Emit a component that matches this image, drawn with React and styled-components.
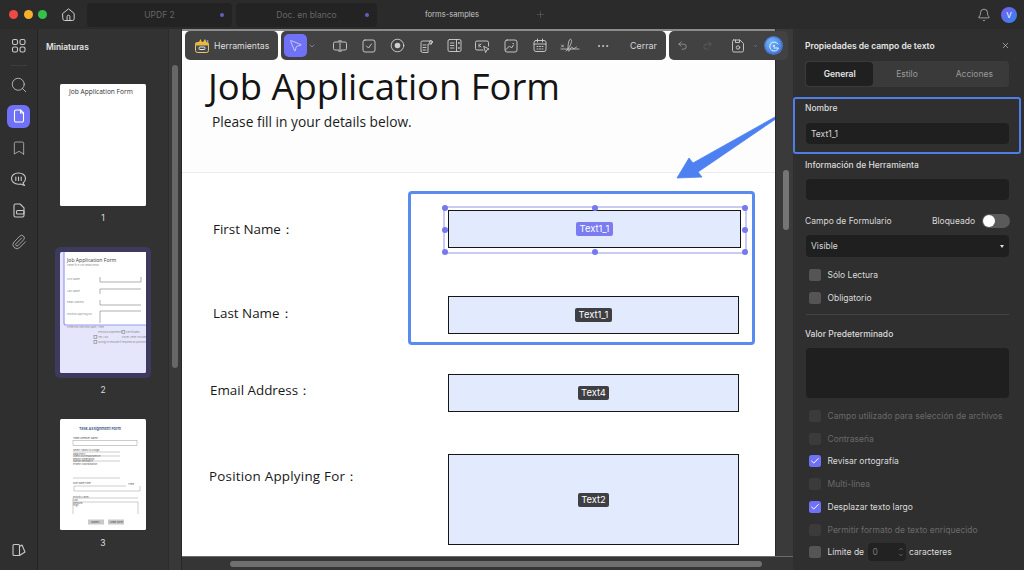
import React from "react";
import styled, { createGlobalStyle } from "styled-components";
import {
  Search, Bookmark, Paperclip, Bell, ChevronDown, MousePointer2,
  Undo2, Redo2, Ellipsis, X, Check, ChevronUp, Plus,
} from "lucide-react";

const Global = createGlobalStyle`
  html, body { margin: 0; padding: 0; background: #2e2e2e; }
  * { box-sizing: border-box; }
  body { font-family: Inter, "Liberation Sans", sans-serif; }
`;

const Shell = styled.div`
  width: 1024px; height: 570px; overflow: hidden; display: flex; flex-direction: column;
  background: #2f2f2f; color: #e6e6e6;
`;

/* ---------- title bar ---------- */
const TitleBar = styled.header`
  height: 29px; flex: none; display: flex; align-items: center; background: #2b2b2b; padding-left: 9px;
`;
const Light = styled.span`
  width: 9px; height: 9px; border-radius: 50%; background: ${p => p.$c}; margin-right: 5.5px;
`;
const HomeBtn = styled.span`
  display: flex; margin: 0 10px 0 7.5px; color: #cfcfcf;
`;
const Tab = styled.div`
  width: ${p => p.$w}px; height: 24px; margin-right: 4px; position: relative; display: flex; align-items: center; justify-content: center;
  background: ${p => (p.$active ? "#2b2b2b" : "#232323")}; border-radius: 4px;
  color: ${p => (p.$active ? "#c4c4c4" : "#666")}; font-size: ${p => (p.$active ? 7.6 : 8.5)}px;
`;
const TabDot = styled.i`
  position: absolute; right: 8px; top: 10px; width: 4px; height: 4px; border-radius: 50%; background: #5f62b8;
`;
const AddTab = styled.span`
  display: flex; color: #666; margin-left: 8px;
`;
const TitleRight = styled.div`
  margin-left: auto; display: flex; align-items: center; gap: 10px; padding-right: 7px; color: #d0d0d0;
`;
const Avatar = styled.div`
  width: 16px; height: 16px; border-radius: 50%; background: linear-gradient(135deg, #7a5cf0, #2f86ef);
  font-size: 8px; color: #fff; display: flex; align-items: center; justify-content: center;
`;

const Body = styled.div`
  flex: 1; display: flex; min-height: 0;
`;

/* ---------- left rail ---------- */
const Rail = styled.nav`
  width: 38px; flex: none; display: flex; flex-direction: column; align-items: center; padding-top: 5px;
  border-right: 1px solid #232323; background: #2f2f2f; color: #c9c9c9;
`;
const RailBtn = styled.div`
  width: 23px; height: 23px; flex: none; border-radius: 6px; display: flex; align-items: center; justify-content: center;
  margin-bottom: 8.4px; background: ${p => (p.$active ? "#6f72f6" : "transparent")}; color: ${p => (p.$active ? "#fff" : "inherit")};
`;
const RailRule = styled.div`
  width: 16px; height: 1px; background: #3c3c3c; margin: 0 0 7px;
`;
const RailFoot = styled.div`
  margin-top: auto; padding-bottom: 12px; display: flex;
`;

/* ---------- thumbnails ---------- */
const ThumbPane = styled.aside`
  width: 144px; flex: none; display: flex; background: #323232; border-right: 1px solid #262626;
`;
const ThumbList = styled.div`
  width: 130px; flex: none; padding: 11px 0 0 8px;
`;
const PaneTitle = styled.div`
  font-size: 8.4px; font-weight: 600; color: #e4e4e4; height: 14px; line-height: 14px; margin-bottom: 25px;
`;
const ThumbItem = styled.div`
  width: 96px; margin: 0 0 0 9px; display: flex; flex-direction: column; align-items: center;
  padding-bottom: ${p => p.$after || 0}px;
`;
const ThumbFrame = styled.div`
  padding: 5px; width: 96px; border-radius: 5px; background: ${p => (p.$sel ? "#3d3a5e" : "transparent")};
  display: flex;
`;
const ThumbNum = styled.div`
  font-size: 8.5px; color: #dcdcdc; text-align: center; height: 12px; line-height: 12px; margin-top: ${p => p.$top}px;
`;
const ThumbScroll = styled.div`
  width: 13px; flex: none; background: #383838; border-left: 1px solid #2c2c2c; padding: 36px 0 0 3px;
`;
const ThumbHandle = styled.div`
  width: 6px; height: 303px; background: #676767; border-radius: 3px;
`;

/* ---------- viewer ---------- */
const Viewer = styled.main`
  flex: 1; min-width: 0; position: relative; display: flex; flex-direction: column;
`;
const ViewerRow = styled.div`
  flex: 1; min-height: 0; display: flex;
`;
const Page = styled.div`
  width: 593px; flex: none; position: relative; overflow: hidden; background: #fff; color: #111;
  border-top: 2px solid #8c8c8c; font-family: "Open Sans", "Noto Sans", sans-serif;
`;
const DocHead = styled.div`
  height: 142px; background: #fdfdfd; border-bottom: 1px solid #ececec; padding: 32px 0 0 26px;
`;
const DocTitle = styled.h1`
  margin: 0; font-size: 36.4px; font-weight: 400; line-height: 46px; color: #141414;
`;
const DocSub = styled.p`
  margin: 3px 0 0 4px; font-size: 13.75px; line-height: 20px; color: #1b1b1b;
`;
const FormList = styled.div`
  padding-top: 37px; display: flex; flex-direction: column;
`;
const FormRow = styled.div`
  display: flex; margin-top: ${p => p.$gap}px; align-items: ${p => p.$align || "center"};
`;
const FormLabelCell = styled.div`
  width: 266px; flex: none; padding-left: ${p => p.$indent}px; padding-top: ${p => p.$top || 0}px;
  padding-bottom: ${p => p.$lift || 0}px; font-size: 13.4px; line-height: 20px; color: #181818;
  letter-spacing: ${p => p.$spread || 0}px;
`;
const Field = styled.div`
  width: ${p => p.$w}px; height: ${p => p.$h}px; background: #e2ebfd; border: 1.5px solid #161616; position: relative;
  display: flex; align-items: center; justify-content: center;
`;
const FieldTag = styled.span`
  background: ${p => (p.$sel ? "#7b7cf2" : "#3f3f43")}; color: #fff; font-size: 9.4px; border-radius: 2px; padding: 0 3.5px;
  line-height: 14px; height: 14px; font-family: Inter, sans-serif;
`;
const Selection = styled.div`
  position: absolute; inset: -5px -7px -7px -6px; border: 2px solid #c9cbf2;
`;
const Handle = styled.i`
  position: absolute; width: 6px; height: 6px; border-radius: 50%; background: #7678ee;
  left: ${p => p.$x}%; top: ${p => p.$y}%; transform: translate(-50%, -50%);
`;
const GroupFrame = styled.div`
  position: absolute; left: 226px; top: 160px; width: 347px; height: 154px; border: 3px solid #5a8bf0; border-radius: 4px;
`;
const Arrow = styled.svg`
  position: absolute; left: 490px; top: 80px;
`;
const VScroll = styled.div`
  width: 18px; flex: none; background: #3a3a3a; border-left: 1px solid #2a2a2a; padding: 141px 0 0 7px;
`;
const VHandle = styled.div`
  width: 6px; height: 60px; background: #757575; border-radius: 3px;
`;
const HScroll = styled.div`
  height: 14px; flex: none; background: #353535; padding: 4px 0 0 48px; border-top: 1px solid #6c6c6c;
`;
const HHandle = styled.div`
  width: 532px; height: 6px; border-radius: 3px; background: #6f6f6f;
`;

/* ---------- floating toolbar ---------- */
const ToolDock = styled.div`
  position: absolute; left: 3px; top: 2px; display: flex; gap: 3px;
`;
const ToolGroup = styled.div`
  height: 29px; width: ${p => p.$w}px; background: #424242; border-radius: 5px; display: flex; align-items: center;
  padding-left: ${p => p.$pad}px; color: #d0d0d0;
`;
const ToolsLabel = styled.span`
  font-size: 8.7px; color: #dedede; margin-left: 4px;
`;
const ArrowBtn = styled.div`
  width: 23px; height: 23px; border-radius: 5px; background: #6f72f6; color: #eee; display: flex; align-items: center; justify-content: center;
`;
const Slot = styled.div`
  width: ${p => p.$w || 28.5}px; flex: none; display: flex; align-items: center; justify-content: center;
  margin-right: ${p => p.$after || 0}px;
  color: ${p => (p.$dim ? "#6d6d6d" : "inherit")};
`;
const CloseLabel = styled.span`
  font-size: 8.9px; color: #d6d6d6; margin-left: 10px;
`;
const AiBadge = styled.div`
  width: 17px; height: 17px; border-radius: 50%; background: radial-gradient(circle at 35% 30%, #6fb3f7, #3a6fe0);
  display: flex; align-items: center; justify-content: center; margin-left: 7px; box-shadow: 0 0 0 1px #4d74c9;
`;

/* ---------- properties ---------- */
const Props = styled.aside`
  width: 231px; flex: none; background: #2f2f2f; padding: 11px 15px 0 12px; position: relative;
  font-size: 8.5px; color: #dadada;
`;
const PropsHead = styled.div`
  display: flex; justify-content: space-between; align-items: center; height: 11px; font-weight: 600; color: #e6e6e6;
  margin-bottom: 10px;
`;
const CloseBtn = styled.span`
  display: flex; color: #d8d8d8; margin-right: -1px;
`;
const Tabs = styled.div`
  height: 26px; width: 204px; background: #3a3a3a; border-radius: 4px; padding: 1px; display: grid; grid-template-columns: repeat(3, 1fr); margin-bottom: 10px;
`;
const TabBtn = styled.div`
  display: flex; align-items: center; justify-content: center; border-radius: 4px;
  background: ${p => (p.$active ? "#202020" : "transparent")}; color: ${p => (p.$active ? "#e6e6e6" : "#9b9b9b")};
  font-weight: ${p => (p.$active ? 600 : 400)};
`;
const NameBox = styled.div`
  margin-left: -12px; width: 228px; height: 57px; border: 2px solid #4f7fe6; border-radius: 3px; padding: 3px 0 0 10px;
`;
const FieldLabel = styled.div`
  height: 12px; line-height: 12px; font-weight: 500; color: #dcdcdc; margin-bottom: ${p => p.$mb ?? 8}px;
  margin-top: ${p => p.$mt ?? 0}px;
`;
const Input = styled.div`
  width: 203px; height: ${p => p.$h || 21}px; background: #1f1f1f; border-radius: 4px; color: #d8d8d8; padding-left: 5px; display: flex; align-items: center;
  margin-left: 1px;
`;
const SplitRow = styled.div`
  display: flex; align-items: center; justify-content: space-between; height: 14px; margin: 14px 0 7px; width: 205px;
`;
const LockGroup = styled.div`
  display: flex; align-items: center; gap: 7px;
`;
const Toggle = styled.div`
  width: 28px; height: 14px; border-radius: 7px; background: #5a5a5a; padding: 1px;
`;
const Knob = styled.div`
  width: 12px; height: 12px; border-radius: 50%; background: #fff;
`;
const SelectBox = styled(Input)`
  height: 22px; justify-content: space-between; padding-right: 5px; margin-bottom: 7px;
`;
const Caret = styled.i`
  border-left: 2px solid transparent; border-right: 2px solid transparent; border-top: 3px solid #ddd;
`;
const CheckList = styled.div`
  margin-top: 7px;
`;
const CheckRow = styled.div`
  height: 22.75px; display: flex; align-items: center; padding-left: 4px; gap: 6.5px;
  color: ${p => (p.$off ? "#6a6a6a" : "#dcdcdc")};
`;
const Box = styled.span`
  width: 12px; height: 12px; border-radius: 2.5px; flex: none; display: flex; align-items: center; justify-content: center; color: #fff;
  background: ${p => (p.$on ? "#6f72f6" : p.$off ? "#3b3b3b" : "#555")};
`;
const Rule = styled.div`
  width: 203px; height: 1px; background: #434343; margin: 4px 0 13px 1px;
`;
const Stepper = styled.span`
  width: 38px; height: 18px; background: #222; border-radius: 4px; display: flex; align-items: center; justify-content: space-between; padding: 0 2px 0 5px; color: #777; margin: 0 -3px;
`;
const StepArrows = styled.span`
  display: flex; flex-direction: column; color: #999;
`;

const Ic = ({ children, w = 16, h = 16, vb, sw = 1 }) => (
  <svg width={w} height={h} viewBox={vb || `0 0 ${w} ${h}`} fill="none" stroke="currentColor" strokeWidth={sw} strokeLinecap="round" strokeLinejoin="round">{children}</svg>
);

const Thumb1 = () => (
  <svg width="86" height="122" viewBox="0 0 86 122">
    <rect width="86" height="122" rx="1.5" fill="#fff" />
    <text x="9" y="10" fontSize="6.6" fill="#333" fontFamily="Open Sans">Job Application Form</text>
  </svg>
);
const Thumb2 = () => (
  <svg width="86" height="121" viewBox="0 0 86 121">
    <rect width="86" height="121" rx="1.5" fill="#e5e5fc" />
    <path d="M4 0H86V73H6a2 2 0 0 1-2-2Z" fill="#fff" />
    <path d="M4 0V71a2 2 0 0 0 2 2H86" stroke="#9a9bee" strokeWidth="1.2" fill="none" />
    <text x="7" y="10" fontSize="5.1" fill="#333" fontFamily="Open Sans">Job Application Form</text>
    <text x="7" y="14" fontSize="2.2" fill="#888">Please fill in your details below.</text>
    <g fontSize="2.5" fill="#888">
      <text x="7" y="28">First Name</text>
      <text x="7" y="40">Last Name</text>
      <text x="7" y="51">Email Address</text>
      <text x="7" y="63">Position Applying For</text>
      <text x="7" y="76">Preferred Interview Date / Time</text>
      <text x="38" y="81">Previous Experience</text>
      <text x="66" y="81">Certificates</text>
      <text x="38" y="86">Yes / No</text>
      <text x="62" y="86">Cover Letter Included</text>
      <text x="38" y="91">Willing to relocate if required by position</text>
    </g>
    <g stroke="#8d8d8d" strokeWidth=".7" fill="none">
      <path d="M40 25V30H81V25" />
      <path d="M40 37V42M40 37H81" />
      <path d="M40 48V53H81" />
      <path d="M40 59V71M40 59H81" />
      <rect x="62" y="78.500" width="2.800" height="2.800" />
      <rect x="34" y="83.500" width="2.800" height="2.800" />
      <rect x="34" y="88.500" width="2.800" height="2.800" />
    </g>
  </svg>
);
const Thumb3 = () => (
  <svg width="86" height="111" viewBox="0 0 86 111">
    <rect width="86" height="111" rx="1.5" fill="#fff" />
    <text x="19" y="11" fontSize="3.8" fill="#34507f" fontWeight="600">Task Assignment Form</text>
    <g fontSize="2.5" fill="#555">
      <text x="13" y="20">Team Member Name:</text>
      <text x="13" y="32">Select Tasks to Assign:</text>
      <text x="13" y="35.500">Data Entry</text>
      <text x="13" y="38">Client Correspondence</text>
      <text x="13" y="40.500">Report Generation</text>
      <text x="13" y="43">Market Research</text>
      <text x="13" y="45.500">Project Coordination</text>
      <text x="13" y="65">Due Date/Time:</text>
      <text x="68" y="66">Time:</text>
      <text x="13" y="78.500">Priority Level:</text>
      <text x="13" y="82">Low</text>
      <text x="13" y="84.500">Medium</text>
      <text x="13" y="87">High</text>
    </g>
    <g stroke="#9a9a9a" strokeWidth=".5" fill="none">
      <rect x="13" y="21.500" width="64" height="5" />
      <path d="M13 33H60M13 37H60M13 42H60M13 59H60M14 67V72H80V67M14 67H66" />
      <path d="M13 79H78M13 83H78V95M13 79V95" />
    </g>
    <rect x="28" y="100.500" width="16" height="5" fill="#c9c9c9" />
    <rect x="48" y="100.500" width="16" height="5" fill="#c9c9c9" />
    <text x="31" y="104.400" fontSize="2.5" fill="#444">Submit</text>
    <text x="50" y="104.400" fontSize="2.5" fill="#444">Clear Form</text>
  </svg>
);

const handles = [[0,0],[50,0],[100,0],[0,50],[100,50],[0,100],[50,100],[100,100]];

export default function App() {
  return (
    <Shell>
      <Global />
      <TitleBar>
        <Light $c="#ee4a45" /><Light $c="#f6b12c" /><Light $c="#35c24a" />
        <HomeBtn><Ic w={17} h={17} vb="0 0 24 24" sw={1.4}><path d="M4 10.500 12 4l8 6.500V18a2.500 2.500 0 0 1-2.500 2.500h-11A2.500 2.500 0 0 1 4 18Z" /><path d="M10 20.500V15a2 2 0 0 1 4 0v5.500" /></Ic></HomeBtn>
        <Tab $w={145}>UPDF 2<TabDot /></Tab>
        <Tab $w={141}>Doc. en blanco<TabDot /></Tab>
        <Tab $w={142} $active>forms-samples</Tab>
        <AddTab><Plus size={11} strokeWidth={1.2} /></AddTab>
        <TitleRight>
          <Bell size={14} strokeWidth={1.2} />
          <Avatar>V</Avatar>
        </TitleRight>
      </TitleBar>
      <Body>
        <Rail>
          <RailBtn>
            <Ic w={17} h={17} sw={1.1}><rect x="2.500" y="2.500" width="5" height="5" rx="1.600" /><rect x="10" y="2.500" width="5" height="5" rx="1.600" /><rect x="2.500" y="10" width="5" height="5" rx="1.600" /><rect x="10" y="10" width="5" height="5" rx="1.600" /></Ic>
          </RailBtn>
          <RailRule />
          <RailBtn><Search size={18} strokeWidth={1.1} /></RailBtn>
          <RailBtn $active>
            <Ic w={16} h={16} sw={1.1}><path d="M3.500 3.500a1.500 1.500 0 0 1 1.500-1.500h4.500l3 3v7.500a1.500 1.500 0 0 1-1.500 1.500H5a1.500 1.500 0 0 1-1.500-1.500Z" /><path d="M9.500 2v3h3" /></Ic>
          </RailBtn>
          <RailBtn><Bookmark size={16} strokeWidth={1.1} /></RailBtn>
          <RailBtn>
            <Ic w={17} h={16} sw={1.1}><path d="M8.500 2c4 0 7 2.300 7 5.500 0 2-1 3.500-2.500 4.500l1.500 2.500-4-1.500c-.6.1-1.300.2-2 .2-4 0-7-2.500-7-5.700S4.500 2 8.500 2Z" /><path d="M5.800 6v3.500M8.500 6v3.500M11.200 6v3.500" /></Ic>
          </RailBtn>
          <RailBtn>
            <Ic w={16} h={16} sw={1.1}><path d="M3 3.500A1.500 1.500 0 0 1 4.500 2h4.600l3.900 3.900v7.600a1.500 1.500 0 0 1-1.500 1.500h-7A1.500 1.500 0 0 1 3 13.500Z" /><rect x="5.500" y="8.500" width="7.500" height="3.500" rx="1" /></Ic>
          </RailBtn>
          <RailBtn><Paperclip size={16} strokeWidth={1.1} /></RailBtn>
          <RailFoot>
            <Ic w={16} h={16} sw={1.1}><rect x="2" y="2.500" width="6.500" height="11" rx="1" /><path d="M8.500 4.500 11 3l3 7-5.500 3.500" /></Ic>
          </RailFoot>
        </Rail>
        <ThumbPane>
          <ThumbList>
            <PaneTitle>Miniaturas</PaneTitle>
            <ThumbItem $after={23}>
              <ThumbFrame><Thumb1 /></ThumbFrame>
              <ThumbNum $top={1}>1</ThumbNum>
            </ThumbItem>
            <ThumbItem $after={18}>
              <ThumbFrame $sel><Thumb2 /></ThumbFrame>
              <ThumbNum $top={6}>2</ThumbNum>
            </ThumbItem>
            <ThumbItem>
              <ThumbFrame><Thumb3 /></ThumbFrame>
              <ThumbNum $top={2}>3</ThumbNum>
            </ThumbItem>
          </ThumbList>
          <ThumbScroll><ThumbHandle /></ThumbScroll>
        </ThumbPane>
        <Viewer>
          <ViewerRow>
            <Page>
              <DocHead>
                <DocTitle>Job Application Form</DocTitle>
                <DocSub>Please fill in your details below.</DocSub>
              </DocHead>
              <FormList>
                <FormRow $gap={0}>
                  <FormLabelCell $indent={31}>First Name：</FormLabelCell>
                  <Field $w={293} $h={38}>
                    <FieldTag $sel>Text1_1</FieldTag>
                    <Selection>{handles.map(([x, y]) => <Handle key={`${x}-${y}`} $x={x} $y={y} />)}</Selection>
                  </Field>
                </FormRow>
                <FormRow $gap={48}>
                  <FormLabelCell $indent={31} $lift={4}>Last Name：</FormLabelCell>
                  <Field $w={291} $h={38}><FieldTag>Text1_1</FieldTag></Field>
                </FormRow>
                <FormRow $gap={40}>
                  <FormLabelCell $indent={28} $lift={6}>Email Address：</FormLabelCell>
                  <Field $w={291} $h={38}><FieldTag>Text4</FieldTag></Field>
                </FormRow>
                <FormRow $gap={42} $align="flex-start">
                  <FormLabelCell $indent={27} $top={12} $spread={0.22}>Position Applying For：</FormLabelCell>
                  <Field $w={291} $h={91}><FieldTag>Text2</FieldTag></Field>
                </FormRow>
              </FormList>
              <GroupFrame />
              <Arrow width="104" height="70" viewBox="0 0 104 70">
                <path d="M103 6 21 52l-4-5L5 67l25-1-4-5 77-52.500Z" fill="#4d80f0" stroke="#4d80f0" strokeWidth=".8" strokeLinejoin="round" />
              </Arrow>
            </Page>
            <VScroll><VHandle /></VScroll>
          </ViewerRow>
          <HScroll><HHandle /></HScroll>
          <ToolDock>
            <ToolGroup $w={93} $pad={9}>
              <svg width="16" height="16" viewBox="0 0 16 16" fill="none">
                <path d="M5 4 6.500 1 8 4ZM9 4l2-3 1.500 3Z" fill="#f2b632" />
                <circle cx="13.500" cy="3" r="1" fill="#5aa7ef" />
                <rect x="1.500" y="4.500" width="13" height="10" rx="2" fill="#4a4a4a" stroke="#e8c76a" />
                <rect x="1.500" y="4.500" width="13" height="3" fill="#e8b83f" />
                <rect x="5" y="9" width="6" height="2.500" rx="1" stroke="#e8e8e8" />
              </svg>
              <ToolsLabel>Herramientas</ToolsLabel>
            </ToolGroup>
            <ToolGroup $w={385} $pad={3}>
              <ArrowBtn><MousePointer2 size={15} strokeWidth={1.1} /></ArrowBtn>
              <Slot $w={10} $after={9}><ChevronDown size={8} strokeWidth={1.4} /></Slot>
              <Slot>
                <Ic w={16} h={16} sw={.9}><path d="M6.500 4H3a1.500 1.500 0 0 0-1.500 1.500v5A1.500 1.500 0 0 0 3 12h3.500" /><path d="M9.500 4H13a1.500 1.500 0 0 1 1.500 1.500v5A1.500 1.500 0 0 1 13 12H9.500" /><path d="M8 3v10M6.500 3h3M6.500 13h3" /></Ic>
              </Slot>
              <Slot>
                <Ic w={14} h={14} sw={.9}><rect x="1" y="1" width="12" height="12" rx="2" /><path d="m4.500 7 2 2 3-4" /></Ic>
              </Slot>
              <Slot>
                <Ic w={15} h={15} sw={.9}><circle cx="7.500" cy="7.500" r="6.300" /><circle cx="7.500" cy="7.500" r="2.800" fill="currentColor" stroke="none" /></Ic>
              </Slot>
              <Slot>
                <Ic w={16} h={16} sw={.9}><path d="M3 13V4.500A1.500 1.500 0 0 1 4.500 3H12a1.500 1.500 0 0 1 1.500 1.500V5" /><path d="M3 13a1.500 1.500 0 0 0 1.500 1.500H10V6h3.500" /><path d="M5 7h3M5 9.500h3M5 12h3" /><circle cx="13" cy="4" r="1.500" /></Ic>
              </Slot>
              <Slot>
                <Ic w={15} h={15} sw={.9}><rect x="1" y="1.500" width="13" height="12" rx="1.500" /><path d="M9.500 1.500v12M3.500 5h3.500M3.500 7.500h3.500M3.500 10h3.500" /><circle cx="11.800" cy="5" r=".4" /><circle cx="11.800" cy="10" r=".4" /></Ic>
              </Slot>
              <Slot>
                <Ic w={17} h={16} sw={.9}><path d="M9 12H3a1.500 1.500 0 0 1-1.500-1.500v-6A1.500 1.500 0 0 1 3 3h10a1.500 1.500 0 0 1 1.500 1.500V8" /><path d="M10 8.500 15 11l-2.200 1-1 2.200Z" /><path d="M5 6v3M7 6 5.500 7.500 7 9" /></Ic>
              </Slot>
              <Slot>
                <Ic w={14} h={14} sw={.9}><rect x="1" y="1" width="12" height="12" rx="2" /><path d="m1.500 11 4-4 2 2 2-3M9 4.500h.5" /></Ic>
              </Slot>
              <Slot>
                <Ic w={14} h={15} sw={.9}><rect x="1" y="2.500" width="12" height="11" rx="2" /><path d="M1 6h12M4.500 1v3M9.500 1v3M4 8.500h1M6.500 8.500h1M9 8.500h1M4 11h1M6.500 11h1M9 11h1" /></Ic>
              </Slot>
              <Slot $w={32}>
                <Ic w={20} h={15} sw={.8}><path d="M1 11h18M1.500 7l2 2M3.500 7l-2 2" /><path d="M6 13c3-2 7-10 5-11.500S8 6 8 10s1 4 2 1.500 2-3 2.500-1.500 2.500 0 4-1" /></Ic>
              </Slot>
              <Slot $w={34}><Ellipsis size={14} strokeWidth={1.5} /></Slot>
              <CloseLabel>Cerrar</CloseLabel>
            </ToolGroup>
            <ToolGroup $w={119} $pad={2}>
              <Slot $w={22}><Undo2 size={11} strokeWidth={1.1} /></Slot>
              <Slot $w={29} $dim><Redo2 size={11} strokeWidth={1.1} /></Slot>
              <Slot $w={31}>
                <Ic w={14} h={14} sw={.9}><path d="M2.500 1h6.500l3.500 3.500V11.500A1.500 1.500 0 0 1 11 13H3a1.500 1.500 0 0 1-1.500-1.500V2.500A1.500 1.500 0 0 1 2.500 1Z" /><path d="M4.500 1v2.500h4V1" /><circle cx="7" cy="8.500" r="1.700" /></Ic>
              </Slot>
              <Slot $w={5}><ChevronDown size={8} strokeWidth={1.4} /></Slot>
              <AiBadge>
                <Ic w={12} h={12} sw={1}><path d="M10 4a4.500 4.500 0 1 0 .5 4H6" stroke="#eaf3ff" /><circle cx="6" cy="6" r="1" fill="#eaf3ff" stroke="none" /></Ic>
              </AiBadge>
            </ToolGroup>
          </ToolDock>
        </Viewer>
        <Props>
          <PropsHead>
            <span>Propiedades de campo de texto</span>
            <CloseBtn><X size={9} strokeWidth={1.6} /></CloseBtn>
          </PropsHead>
          <Tabs>
            <TabBtn $active>General</TabBtn>
            <TabBtn>Estilo</TabBtn>
            <TabBtn>Acciones</TabBtn>
          </Tabs>
          <NameBox>
            <FieldLabel $mb={9}>Nombre</FieldLabel>
            <Input>Text1_1</Input>
          </NameBox>
          <FieldLabel $mt={5}>Información de Herramienta</FieldLabel>
          <Input />
          <SplitRow>
            <span>Campo de Formulario</span>
            <LockGroup>Bloqueado<Toggle><Knob /></Toggle></LockGroup>
          </SplitRow>
          <SelectBox>Visible<Caret /></SelectBox>
          <CheckRow><Box />Sólo Lectura</CheckRow>
          <CheckRow><Box />Obligatorio</CheckRow>
          <Rule />
          <FieldLabel>Valor Predeterminado</FieldLabel>
          <Input $h={50} />
          <CheckList>
            <CheckRow $off><Box $off />Campo utilizado para selección de archivos</CheckRow>
            <CheckRow $off><Box $off />Contraseña</CheckRow>
            <CheckRow><Box $on><Check size={10} strokeWidth={2.4} /></Box>Revisar ortografía</CheckRow>
            <CheckRow $off><Box $off />Multi-línea</CheckRow>
            <CheckRow><Box $on><Check size={10} strokeWidth={2.4} /></Box>Desplazar texto largo</CheckRow>
            <CheckRow $off><Box $off />Permitir formato de texto enriquecido</CheckRow>
            <CheckRow>
              <Box />Límite de
              <Stepper>0<StepArrows><ChevronUp size={6} strokeWidth={2} /><ChevronDown size={6} strokeWidth={2} /></StepArrows></Stepper>
              caracteres
            </CheckRow>
          </CheckList>
        </Props>
      </Body>
    </Shell>
  );
}
